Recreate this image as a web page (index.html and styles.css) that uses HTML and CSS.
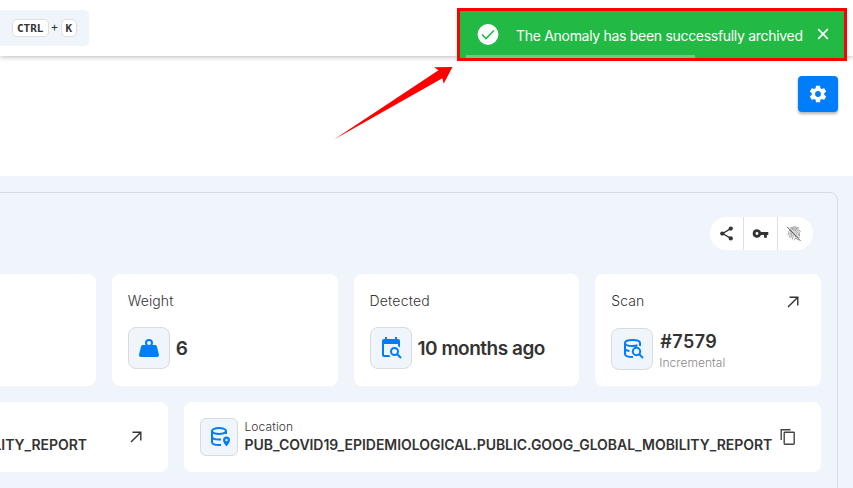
FILE: index.html
```html
<!DOCTYPE html>
<html lang="en">
<head>
<meta charset="utf-8">
<title>Anomaly</title>
<link rel="stylesheet" href="styles.css">
</head>
<body>
<header class="topbar">
  <div class="search"><kbd>CTRL</kbd><span class="plus">+</span><kbd>K</kbd></div>
</header>
<section class="actions">
  <button class="settings" aria-label="Settings">
    <svg width="20" height="20" viewBox="0 0 24 24" fill="#fff"><path d="M12 15.5A3.5 3.5 0 0 1 8.500 12 3.500 3.500 0 0 1 12 8.500a3.500 3.500 0 0 1 3.500 3.500 3.500 3.500 0 0 1-3.500 3.500m7.430-2.530c.04-.32.07-.64.07-.97s-.03-.66-.07-1l2.110-1.630c.19-.15.24-.42.12-.64l-2-3.460c-.12-.22-.39-.31-.61-.22l-2.490 1c-.52-.39-1.060-.73-1.690-.98l-.37-2.650A.506.506 0 0 0 14 2h-4c-.25 0-.46.18-.5.420l-.37 2.650c-.63.25-1.170.59-1.690.98l-2.490-1c-.22-.09-.49 0-.61.22l-2 3.460c-.13.22-.07.49.12.64L4.570 11c-.04.34-.07.67-.07 1s.03.65.07.97l-2.110 1.660c-.19.15-.25.42-.12.64l2 3.460c.12.22.39.3.61.22l2.490-1.010c.52.4 1.060.74 1.690.99l.37 2.650c.04.24.25.42.5.42h4c.25 0 .46-.18.5-.42l.37-2.650c.63-.26 1.170-.59 1.690-.99l2.490 1.010c.22.08.49 0 .61-.22l2-3.460c.12-.22.07-.49-.12-.64z"/></svg>
  </button>
</section>
<main class="content">
  <div class="panel">
    <div class="tools">
      <div class="tool"><svg width="17" height="17" viewBox="0 0 24 24" fill="#333"><path d="M6.500 12 17.500 5.500M6.500 12l11 6.500" stroke="#333" stroke-width="2"/><circle cx="18" cy="5" r="3"/><circle cx="6" cy="12" r="3"/><circle cx="18" cy="19" r="3"/></svg></div>
      <div class="tool key"><svg width="17" height="17" viewBox="0 0 24 24" fill="#333"><path d="M7 14a2 2 0 0 1 0-4 2 2 0 0 1 0 4m5.650-4A6 6 0 0 0 7 6a6 6 0 1 0 5.650 8H17v4h4v-4h2v-4z"/></svg></div>
      <div class="tool print"><svg width="17" height="17" viewBox="0 0 24 24" fill="none" stroke="#888" stroke-width="1.100" stroke-linecap="round"><path d="M6 4Q12 .8 18 4M3.500 9Q12-1 20.500 9M5 17q1.500-3 .6-6C6.500 4 17.500 4 19 12v3M9 20q1.800-5 1-8c.3-3 5-2.500 5 0 .2 5 2 6 4 6M7 18q1.800-4 .8-6.500C9 6 16 7 17 12q0 3 2.500 4M12.500 12c0 5 1.500 8 4.500 9M3 14l.7-3M12 21l1-2"/><path d="m2 3 18 19" stroke="#555" stroke-width="1.400"/></svg></div>
    </div>
    <div class="metrics">
      <article class="card"></article>
      <article class="card">
        <div class="card-head"><span class="weight">Weight</span></div>
        <div class="metric"><span class="tile"><svg width="24" height="24" viewBox="0 0 24 24" fill="#007dfa"><path d="M12 3a4 4 0 0 1 4 4c0 .73-.19 1.410-.54 2H18c.95 0 1.750.67 1.950 1.560C21.960 18.570 22 18.780 22 19a2 2 0 0 1-2 2H4a2 2 0 0 1-2-2c0-.22.04-.43 2.050-8.440C4.250 9.670 5.050 9 6 9h2.540C8.190 8.410 8 7.730 8 7a4 4 0 0 1 4-4m0 2a2 2 0 1 0 0 4 2 2 0 0 0 0-4"/></svg></span><strong class="six">6</strong></div>
      </article>
      <article class="card">
        <div class="card-head"><span class="detected">Detected</span></div>
        <div class="metric"><span class="tile"><svg width="24" height="24" viewBox="0 0 24 24"><path fill="#007dfa" d="M5 3h1V1h2v2h8V1h2v2h1a2 2 0 0 1 2 2v6.500a6.800 6.800 0 0 0-2-1.500V8H5v11h5.200a6.500 6.500 0 0 0 1.300 2H5a2 2 0 0 1-2-2V5a2 2 0 0 1 2-2"/><circle cx="15.500" cy="15.500" r="3.500" fill="none" stroke="#007dfa" stroke-width="2"/><path d="m18 18 4 4" stroke="#007dfa" stroke-width="2.100"/></svg></span><strong class="ago">10 months ago</strong></div>
      </article>
      <article class="card">
        <div class="card-head"><span class="scan">Scan</span><svg class="arrow" width="12" height="12" viewBox="0 0 12 12" fill="none" stroke="#333" stroke-width="1.400"><path d="M1 11 10.800 1.200M2.500 1.200h8.300v8.300"/></svg></div>
        <div class="metric scan-row"><span class="tile"><svg class="db-search" width="24" height="24" viewBox="0 0 24 24" fill="none" stroke="#007dfa" stroke-width="2"><path d="M19 9V6c0-1.700-3-3-7.500-3S4 4.300 4 6s3 3 7.500 3c2 0 3.700-.3 5-.8M4 6v11c0 1.700 3 3 8 3M4 11.500c0 1.100 1.800 2.100 4.500 2.600"/><circle cx="15.500" cy="14.500" r="3.700"/><path d="m18 17 4 4"/></svg></span><div class="stack"><strong class="num">#7579</strong><span class="sub">Incremental</span></div></div>
      </article>
    </div>
    <div class="places">
      <article class="place source"><strong class="path">GOOG_GLOBAL_MOBILITY_REPORT</strong><svg class="arrow" width="12" height="12" viewBox="0 0 12 12" fill="none" stroke="#333" stroke-width="1.400"><path d="M1 11 10.800 1.200M2.500 1.200h8.300v8.300"/></svg></article>
      <article class="place location">
        <span class="tile small"><svg class="db-pin" width="24" height="24" viewBox="0 0 24 24" fill="none" stroke="#007dfa" stroke-width="2"><ellipse cx="11" cy="6" rx="7" ry="3"/><path d="M4 6v11c0 1.700 3 3 7 3h2M4 11.500c0 1.700 3 3 7 3h2M18 6v3"/><path fill="#007dfa" fill-rule="evenodd" stroke="none" d="M18.500 11.500c-2 0-3.500 1.500-3.500 3.500 0 2.500 3.500 6.500 3.500 6.500S22 17.500 22 15c0-2-1.500-3.500-3.500-3.500m0 2.300a1.200 1.200 0 1 1 0 2.400 1.200 1.200 0 0 1 0-2.400"/></svg></span>
        <div class="address"><span class="label">Location</span><strong class="path full">PUB_COVID19_EPIDEMIOLOGICAL.PUBLIC.GOOG_GLOBAL_MOBILITY_REPORT</strong></div>
        <svg class="copy" width="16" height="18" viewBox="0 0 16 18" fill="none" stroke="#444" stroke-width="1.400"><path d="M1.200 12V1.700h9.300"/><rect x="4.200" y="4.200" width="10" height="12" rx=".7"/></svg>
      </article>
    </div>
  </div>
</main>
<svg class="pointer" width="120" height="78" viewBox="0 0 120 78"><path fill="#f00" d="M0 75.500 104.500 6.300 100 3.200 118.500 3 109.700 19.700l-1.300-5.400Z"/></svg>
<div class="toast">
  <svg class="check" width="22" height="22" viewBox="0 0 22 22"><circle cx="11" cy="10.500" r="10.400" fill="#fff"/><path d="m5 10.500 4 4 8-8" fill="none" stroke="#22b945" stroke-width="1.600"/></svg>
  <span class="message">The Anomaly has been successfully archived</span>
  <svg class="close" width="12" height="12" viewBox="0 0 12 12"><path d="m1.200 1.200 9.600 9.600m0-9.600-9.600 9.600" stroke="#fff" stroke-width="1.700"/></svg>
  <div class="progress"></div>
</div>
</body>
</html>
```

FILE: styles.css
```css
* { box-sizing: border-box; }
body { margin: 0; width: 853px; height: 488px; overflow: hidden; background: #fff; color: #333; font-family: Inter, "Open Sans", sans-serif; }
svg { display: block; flex: none; }
.topbar { height: 56px; padding-top: 10px; box-shadow: 0 1px 5px rgba(0,0,0,.28); }
.search { display: flex; align-items: center; width: 89px; height: 36px; padding-left: 12px; background: #eff5fa; border-radius: 0 5px 5px 0; }
kbd { height: 18px; padding: 0 4px; border: 1px solid #dedede; border-radius: 5px; background: #fff; font: bold 11px/17px "DejaVu Sans Mono", monospace; }
.plus { width: 12px; text-align: center; font-size: 12px; line-height: 14px; margin-top: -2px; }
.actions { height: 120px; display: flex; justify-content: flex-end; padding: 20px 15px 0; }
.settings { width: 40px; height: 36px; padding: 0; display: grid; place-items: center; border: 0; border-radius: 4px; background: #007dfa; box-shadow: 0 2px 3px rgba(0,0,0,.3); }
.content { height: 312px; padding-top: 16px; background: #eff5fa; }
.panel { width: 985px; height: 320px; margin-left: -147px; padding: 24px 16px; border: 1px solid #d6dce1; border-radius: 8px; }
.tools { display: flex; width: 103px; height: 33px; margin: 0 8px 24px auto; background: #fff; border-radius: 17px; }
.tool { width: 33px; display: grid; place-items: center; }
.tool + .tool { width: 34px; border-left: 1px solid #dedfe1; }
.metrics { display: grid; grid-template-columns: repeat(4, 1fr); gap: 16px; }
.card { height: 112px; padding: 16px; border-radius: 8px; background: #fff; }
.card-head { display: flex; justify-content: space-between; height: 22px; font-size: 14px; line-height: 22px; color: #333; font-weight: 300; }
.weight { letter-spacing: .12px; }
.detected { letter-spacing: .2px; }
.scan { letter-spacing: .05px; }
.card-head .arrow { margin: 6px 6px 0 0; }
.metric { display: flex; align-items: center; gap: 6px; margin-top: 15px; }
.scan-row { margin-top: 16px; gap: 7px; }
.tile { flex: none; display: grid; place-items: center; width: 42px; height: 42px; border: 1px solid #d7dce1; border-radius: 8px; background: #eff5fa; }
.db-search { margin-left: 2px; }
.db-pin { margin-left: 2px; }
.small { width: 38px; height: 38px; border-radius: 6px; }
strong { font-weight: 600; }
.six, .ago { font-size: 19px; line-height: 24px; padding-top: 2px; }
.ago { letter-spacing: -.48px; }
.stack { display: flex; flex-direction: column; height: 42px; padding-top: 3px; }
.num { font-size: 18px; line-height: 22px; letter-spacing: .45px; }
.sub { font-size: 12px; line-height: 20px; color: #888; font-weight: 300; letter-spacing: .05px; margin-left: -1px; }
.places { display: grid; grid-template-columns: 298px 1fr; gap: 16px; margin-top: 16px; }
.place { display: flex; align-items: center; height: 70px; padding: 0 16px; border-radius: 8px; background: #fff; }
.source { justify-content: flex-end; padding-right: 26px; }
.source .path { margin: 16px 43px 0 0; }
.path { font-size: 14px; line-height: 18px; white-space: nowrap; letter-spacing: -.04px; }
.address { display: flex; flex-direction: column; width: 529px; margin: -2px 0 0 6.500px; }
.label { font-size: 12px; line-height: 18px; color: #333; font-weight: 300; letter-spacing: .1px; }
.copy { margin-left: 6.500px; }
.pointer { position: absolute; left: 333.500px; top: 64px; }
.toast { position: absolute; left: 457px; top: 8px; width: 390px; height: 53px; display: flex; align-items: center; padding-left: 17px; border: 3px solid #f00; background: #22b945; color: #fff; }
.message { width: 288px; margin: 1px 14px 0 17px; font-size: 14px; font-weight: 400; letter-spacing: -.3px; white-space: nowrap; }
.close { margin: -2px 0 0 -1px; }
.progress { position: absolute; left: 6px; bottom: 0; width: 229px; height: 3px; background: #64ce7c; }
```
